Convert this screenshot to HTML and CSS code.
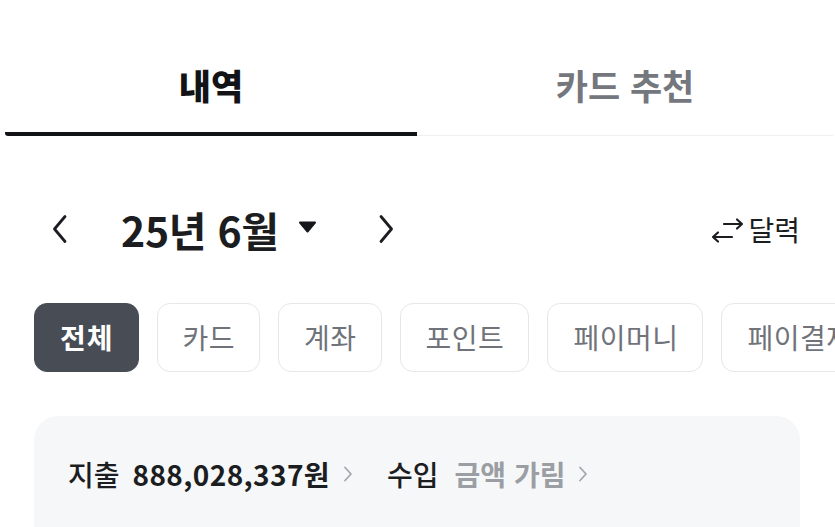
FILE: index.html
```html
<!DOCTYPE html>
<html lang="ko">
<head>
<meta charset="utf-8">
<title>내역</title>
<link rel="stylesheet" href="styles.css">
</head>
<body>
<div class="page">
  <nav class="tabs">
    <div class="tab tab-active">내역</div>
    <div class="tab">카드 추천</div>
  </nav>

  <div class="month-row">
    <div class="month-nav">
      <svg class="chev" width="18" height="30" viewBox="0 0 18 30"><path d="M14 2.5 L3.5 15 L14 27.5" fill="none" stroke="#1b1d21" stroke-width="2.8" stroke-linecap="round" stroke-linejoin="round"/></svg>
      <div class="month-title">25년 6월 <svg class="caret" width="19" height="12" viewBox="0 0 19 12"><path d="M2 1.5 H17 L9.5 10.5 Z" fill="#14161a" stroke="#14161a" stroke-width="2" stroke-linejoin="round"/></svg></div>
      <svg class="chev" width="18" height="30" viewBox="0 0 18 30"><path d="M4 2.5 L14.5 15 L4 27.5" fill="none" stroke="#1b1d21" stroke-width="2.8" stroke-linecap="round" stroke-linejoin="round"/></svg>
    </div>
    <div class="calendar-link">
      <svg width="34" height="30" viewBox="0 0 34 30"><path d="M14 9 H32 M27 4.5 L32 9 L27 13.5" fill="none" stroke="#1b1d21" stroke-width="2.2" stroke-linecap="round" stroke-linejoin="round"/><path d="M22 22 H3 M8 17.5 L3 22 L8 26.5" fill="none" stroke="#1b1d21" stroke-width="2.2" stroke-linecap="round" stroke-linejoin="round"/></svg>
      <span>달력</span>
    </div>
  </div>

  <div class="chips">
    <div class="chip chip-on">전체</div>
    <div class="chip">카드</div>
    <div class="chip">계좌</div>
    <div class="chip">포인트</div>
    <div class="chip">페이머니</div>
    <div class="chip">페이결제</div>
  </div>

  <section class="summary">
    <span class="label">지출</span>
    <span class="amount">888,028,337원</span>
    <svg class="arrow" width="10" height="16" viewBox="0 0 10 16"><path d="M2 1.5 L8 8 L2 14.5" fill="none" stroke="#a3a6ab" stroke-width="1.8" stroke-linecap="round" stroke-linejoin="round"/></svg>
    <span class="label label-gap">수입</span>
    <span class="hidden-amount">금액 가림</span>
    <svg class="arrow" width="10" height="16" viewBox="0 0 10 16"><path d="M2 1.5 L8 8 L2 14.5" fill="none" stroke="#a3a6ab" stroke-width="1.8" stroke-linecap="round" stroke-linejoin="round"/></svg>
  </section>
</div>
</body>
</html>
```

FILE: styles.css
```css
* { box-sizing: border-box; }

html, body {
  margin: 0;
  background: #ffffff;
  font-family: "Noto Sans CJK KR", "Noto Sans", sans-serif;
  color: #1b1d21;
}

.page {
  width: 835px;
  height: 527px;
  overflow: hidden;
}

/* top tab bar */
.tabs {
  display: flex;
  align-items: flex-end;
  margin: 0 2px 0 5px;
}

.tab {
  flex: 1;
  text-align: center;
  font-size: 35px;
  font-weight: 700;
  line-height: 50px;
  padding-top: 60px;
  padding-bottom: 25px;
  color: #74777d;
  border-bottom: 1px solid #eeeff1;
}

.tab-active {
  flex: 0 0 412px;
  color: #111317;
  font-weight: 900;
  border-bottom: 4px solid #111317;
  padding-bottom: 22px;
  border-radius: 0 0 0 3px;
}

/* month selector */
.month-row {
  display: flex;
  align-items: center;
  justify-content: space-between;
  height: 56px;
  margin-top: 65px;
  padding: 0 35px 0 51px;
}

.month-nav {
  display: flex;
  align-items: center;
}

.chev { display: block; }

.month-title {
  display: flex;
  align-items: center;
  font-size: 41px;
  font-weight: 700;
  letter-spacing: -0.3px;
  margin-left: 52px;
  width: 256px;
}

.caret {
  display: block;
  margin-left: 19px;
  margin-top: -4px;
}

.calendar-link {
  display: flex;
  align-items: center;
  gap: 4px;
  font-size: 28px;
  font-weight: 400;
}

.calendar-link svg { display: block; margin-top: 2px; }

.chips {
  display: flex;
  gap: 18px;
  margin-top: 46px;
  padding-left: 34px;
  white-space: nowrap;
}

.chip {
  flex: none;
  height: 69px;
  line-height: 66px;
  padding: 0 24px 0 25px;
  font-size: 28px;
  letter-spacing: 0.5px;
  color: #707379;
  border: 1.5px solid #e6e7ea;
  border-radius: 13px;
  background: #ffffff;
}

.chip-on {
  background: #474c55;
  border-color: #474c55;
  color: #ffffff;
  font-weight: 700;
  letter-spacing: 1px;
}

/* spending summary card */
.summary {
  display: flex;
  align-items: center;
  height: 150px;
  margin: 44px 35px 0 34px;
  padding: 0 0 34px 34px;
  background: #f6f7f9;
  border-radius: 24px;
  font-size: 28px;
}

.label { color: #1b1d21; font-weight: 500; }

.label-gap { margin-left: 34px; }

.amount {
  font-weight: 700;
  margin-left: 13px;
  letter-spacing: 0.4px;
}

.hidden-amount {
  color: #9b9ea3;
  font-weight: 700;
  margin-left: 16px;
}

.arrow {
  display: block;
  margin-left: 13px;
}
```
